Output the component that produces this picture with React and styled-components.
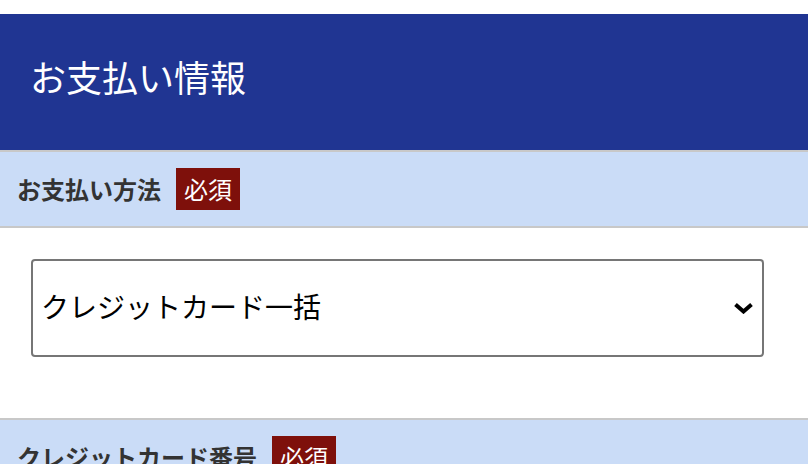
import React from "react";
import styled, { createGlobalStyle } from "styled-components";

const GlobalStyle = createGlobalStyle`
  html, body {
    margin: 0;
    padding: 0;
    background: #fff;
    font-family: "Noto Sans CJK JP", "Noto Sans", sans-serif;
  }
`;

const Page = styled.div`
  padding-top: 14px;
  width: 808px;
  overflow: hidden;
`;

const Header = styled.header`
  background-color: #203592;
  padding: 35px 30px 47px;
  h1 {
    margin: 0;
    font-size: 36px;
    line-height: 54px;
    font-weight: 400;
    color: #fff;
  }
`;

const SectionHead = styled.div`
  display: flex;
  align-items: center;
  gap: 15px;
  background-color: #cadcf7;
  border-top: 2px solid #c8c8c8;
  border-bottom: 2px solid #c8c8c8;
  padding: 16px 17px;
  h2 {
    margin: 0;
    font-size: 24px;
    line-height: 42px;
    font-weight: 700;
    color: #333;
  }
`;

const Required = styled.span`
  display: inline-block;
  background-color: #7e100b;
  color: #fff;
  font-size: 24px;
  line-height: 42px;
  padding: 0 8px;
`;

const Body = styled.div`
  padding: 31px 44px 61px 31px;
`;

const SelectWrap = styled.div`
  position: relative;
  svg {
    position: absolute;
    right: 10px;
    top: 50%;
    transform: translateY(-50%);
    pointer-events: none;
  }
`;

const Select = styled.select`
  appearance: none;
  width: 100%;
  height: 98px;
  box-sizing: border-box;
  border: 2px solid #767676;
  border-radius: 4px;
  background: #fff;
  padding: 0 40px 4px 8px;
  font-family: inherit;
  font-size: 28px;
  color: #000;
  outline: none;
`;

const Chevron = () => (
  <svg width="21" height="12" viewBox="0 0 21 12">
    <polyline
      points="2.5,2.5 10.5,9.5 18.5,2.5"
      fill="none"
      stroke="#000"
      strokeWidth="4"
    />
  </svg>
);

export default function App() {
  return (
    <Page>
      <GlobalStyle />
      <Header>
        <h1>お支払い情報</h1>
      </Header>
      <SectionHead>
        <h2>お支払い方法</h2>
        <Required>必須</Required>
      </SectionHead>
      <Body>
        <SelectWrap>
          <Select defaultValue="lump">
            <option value="lump">クレジットカード一括</option>
            <option value="split">クレジットカード分割</option>
          </Select>
          <Chevron />
        </SelectWrap>
      </Body>
      <SectionHead>
        <h2>クレジットカード番号</h2>
        <Required>必須</Required>
      </SectionHead>
    </Page>
  );
}
